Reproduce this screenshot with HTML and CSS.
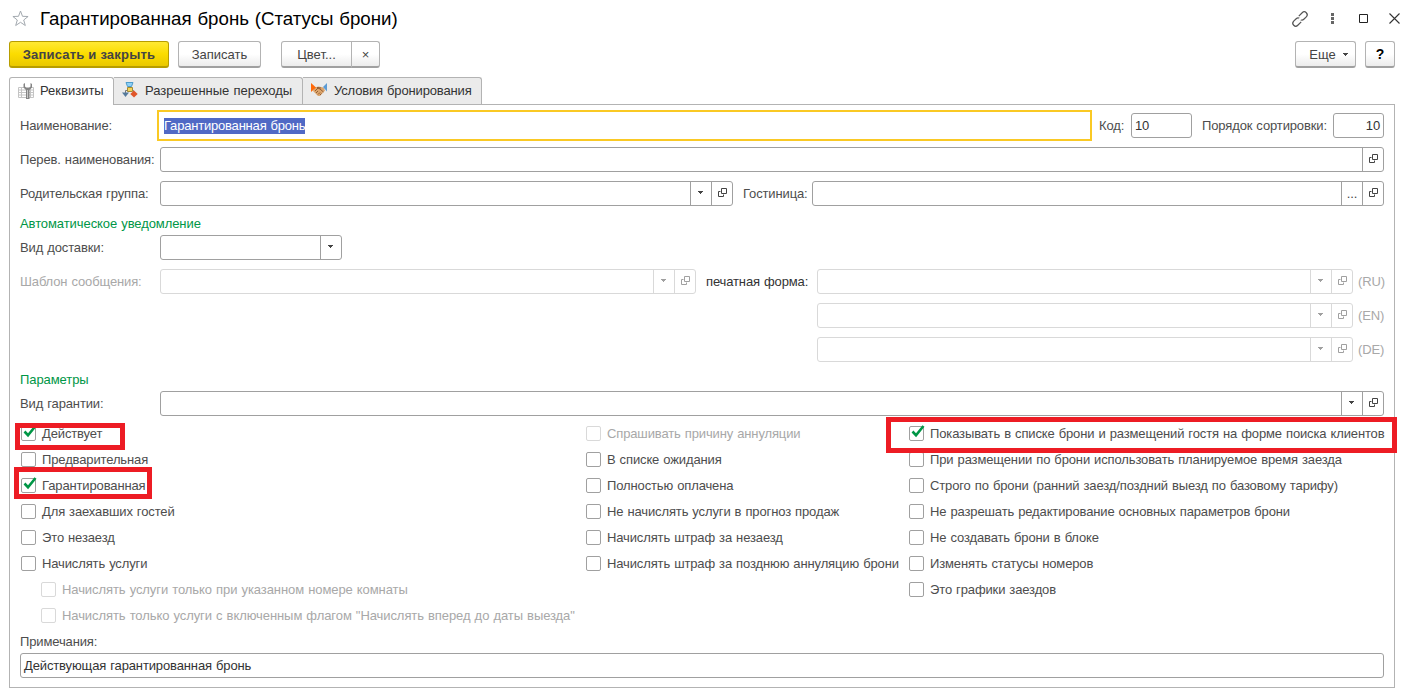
FILE: index.html
```html
<!DOCTYPE html>
<html lang="ru">
<head>
  <meta charset="UTF-8" />
  <meta name="viewport" content="width=device-width, initial-scale=1.0"/>
  <title>Гарантированная бронь (Статусы брони)</title>
  <link rel="stylesheet" href="styles.css">
</head>
<body>

  <svg class="sprite" width="0" height="0">
    <symbol id="open" viewBox="0 0 9 9">
      <path d="M3.500 .5h5v5h-5zM2.500 3.500h-2v5h5v-2" fill="none" stroke="currentColor"/>
    </symbol>
    <symbol id="arrow" viewBox="0 0 5 3">
      <path d="M0 0h5v1h-1v1h-1v1h-1v-1h-1v-1h-1z" fill="currentColor"/>
    </symbol>
    <symbol id="check" viewBox="0 0 14 13">
      <path d="M1.500 6.500L5 10.200L12.500 1" fill="none" stroke="#009646" stroke-width="2.600"/>
    </symbol>
  </svg>

  <header class="titlebar">
    <svg class="star" width="17" height="17" viewBox="0 0 17 17"><path d="M8.500 1l2 5.300 5.600.2-4.400 3.500 1.600 5.500-4.800-3.200-4.800 3.200L5.300 10 .9 6.500l5.600-.2z" fill="none" stroke="#a3a9af"/></svg>
    <h1>Гарантированная бронь (Статусы брони)</h1>
    <div class="window-buttons">
      <svg width="16" height="16" viewBox="0 0 16 16"><g fill="none" stroke="#555" stroke-width="1.200" transform="rotate(-45 8 8)"><path d="M9 8H3.500"/><path d="M5.500 4.800h-3a3.200 3.200 0 0 0 0 6.400h3a3.200 3.200 0 0 0 3.100-3.200" stroke="none"/><path d="M6.800 10.900H2a2.900 2.900 0 0 1 0-5.800h3.500a2.900 2.900 0 0 1 2.700 2"/><path d="M9.200 5.100H14a2.900 2.900 0 0 1 0 5.800h-3.500a2.900 2.900 0 0 1-2.700-2"/><path d="M3 8h6.500" stroke="#fff" stroke-width="2"/></g></svg>
      <svg width="3" height="11" viewBox="0 0 3 11"><path d="M0 0h3v3H0zM0 4h3v3H0zM0 8h3v3H0z" fill="#666"/></svg>
      <svg width="9" height="9" viewBox="0 0 9 9"><path d="M.5 .5h8v8h-8z" fill="none" stroke="#222"/></svg>
      <svg width="11" height="11" viewBox="0 0 11 11"><path d="M.5 .5l10 10M10.500 .5l-10 10" stroke="#333" stroke-width="1.100"/></svg>
    </div>
  </header>

  <div class="toolbar">
    <button class="btn btn-main">Записать и закрыть</button>
    <button class="btn btn-save">Записать</button>
    <div class="btn-group">
      <button class="btn btn-color">Цвет...</button>
      <button class="btn btn-clear">×</button>
    </div>
    <button class="btn btn-more">Еще <svg width="5" height="3"><use href="#arrow"/></svg></button>
    <button class="btn btn-help">?</button>
  </div>

  <nav class="tabs">
    <div class="tab tab-details active">
      <svg width="16" height="16" viewBox="0 0 16 16">
        <path d="M.5 4.500h15v10H.5zM.5 7h15M.5 9.500h15M.5 12h15M3.500 4.500v10M12.500 4.500v10" fill="#fff" stroke="#c4c4c4"/>
        <path d="M5.500 1v3.500L8 7v9h3.500V7L14 4.500V1l-1.500-1v3.500L11 5H8.500L7 3.500V0z" fill="#858585"/>
        <path d="M9.500 7v8" stroke="#c8c8c8"/>
      </svg>
      <span>Реквизиты</span>
    </div>
    <div class="tab tab-flow">
      <svg width="16" height="16" viewBox="0 0 16 16">
        <path d="M3.500 11V8.500h8V10" fill="none" stroke="#777"/>
        <path d="M4 .5h7L9.500 4.500h-4z" fill="#8fd0f5" stroke="#4d9ccc"/>
        <path d="M5.500 5.500h5v4h-5z" fill="#f3d45b" stroke="#a58b32"/>
        <path d="M0 10.500h7L3.500 15z" fill="#557a9c"/>
        <path d="M12 8.500l3.700 3.500-3.700 3.500L8.300 12z" fill="#e0562a"/>
      </svg>
      <span>Разрешенные переходы</span>
    </div>
    <div class="tab tab-terms">
      <svg width="16" height="14" viewBox="0 0 16 14">
        <path d="M3.500 4.500l4-1 5 1 1.500 3-5 5.500h-2L2 8z" fill="#dca66e"/>
        <path d="M4 8l3-3 2 1 3.500 3M5 10l2-2M7 11.500l2-2M9 12l1.500-1.500M6 4.500l4 .5" fill="none" stroke="#7d4a25" stroke-width=".8"/>
        <path d="M0 0l5 4.500L0 9z" fill="#ff6a0a"/>
        <path d="M16 0l-4 4 4 4.500z" fill="#5d9bd3"/>
      </svg>
      <span>Условия бронирования</span>
    </div>
  </nav>

  <main class="panel">
    <div class="row">
      <label class="label">Наименование:</label>
      <div class="field grow focused"><span class="selected">Гарантированная бронь</span></div>
      <label class="label-code">Код:</label>
      <div class="field field-code">10</div>
      <label class="label-order">Порядок сортировки:</label>
      <div class="field field-order">10</div>
    </div>
    <div class="row">
      <label class="label">Перев. наименования:</label>
      <div class="field grow"><i class="pick"><svg><use href="#open"/></svg></i></div>
    </div>
    <div class="row">
      <label class="label">Родительская группа:</label>
      <div class="field field-parent"><i class="drop"><svg><use href="#arrow"/></svg></i><i class="pick"><svg><use href="#open"/></svg></i></div>
      <label class="label-hotel">Гостиница:</label>
      <div class="field grow"><i class="dots">...</i><i class="pick"><svg><use href="#open"/></svg></i></div>
    </div>

    <h2>Автоматическое уведомление</h2>
    <div class="row">
      <label class="label">Вид доставки:</label>
      <div class="field field-delivery"><i class="drop"><svg><use href="#arrow"/></svg></i></div>
    </div>
    <div class="row disabled">
      <label class="label">Шаблон сообщения:</label>
      <div class="field field-template"><i class="drop"><svg><use href="#arrow"/></svg></i><i class="pick"><svg><use href="#open"/></svg></i></div>
      <label class="label-print">печатная форма:</label>
      <div class="field field-print"><i class="drop"><svg><use href="#arrow"/></svg></i><i class="pick"><svg><use href="#open"/></svg></i></div>
      <span class="lang">(RU)</span>
    </div>
    <div class="row disabled row-right">
      <div class="field field-print"><i class="drop"><svg><use href="#arrow"/></svg></i><i class="pick"><svg><use href="#open"/></svg></i></div>
      <span class="lang">(EN)</span>
    </div>
    <div class="row disabled row-right">
      <div class="field field-print"><i class="drop"><svg><use href="#arrow"/></svg></i><i class="pick"><svg><use href="#open"/></svg></i></div>
      <span class="lang">(DE)</span>
    </div>

    <h2>Параметры</h2>
    <div class="row">
      <label class="label">Вид гарантии:</label>
      <div class="field grow"><i class="drop"><svg><use href="#arrow"/></svg></i><i class="pick"><svg><use href="#open"/></svg></i></div>
    </div>

    <div class="checks">
      <div class="check-col">
        <div class="check"><b><svg><use href="#check"/></svg></b><span>Действует</span><div class="mark mark-active"></div></div>
        <div class="check"><b></b><span>Предварительная</span></div>
        <div class="check"><b><svg><use href="#check"/></svg></b><span>Гарантированная</span><div class="mark mark-guaranteed"></div></div>
        <div class="check"><b></b><span>Для заехавших гостей</span></div>
        <div class="check"><b></b><span>Это незаезд</span></div>
        <div class="check"><b></b><span>Начислять услуги</span></div>
        <div class="check sub off"><b></b><span>Начислять услуги только при указанном номере комнаты</span></div>
        <div class="check sub off"><b></b><span>Начислять только услуги с включенным флагом "Начислять вперед до даты выезда"</span></div>
      </div>
      <div class="check-col">
        <div class="check off"><b></b><span>Спрашивать причину аннуляции</span></div>
        <div class="check"><b></b><span>В списке ожидания</span></div>
        <div class="check"><b></b><span>Полностью оплачена</span></div>
        <div class="check"><b></b><span>Не начислять услуги в прогноз продаж</span></div>
        <div class="check"><b></b><span>Начислять штраф за незаезд</span></div>
        <div class="check"><b></b><span>Начислять штраф за позднюю аннуляцию брони</span></div>
      </div>
      <div class="check-col">
        <div class="check"><b><svg><use href="#check"/></svg></b><span>Показывать в списке брони и размещений гостя на форме поиска клиентов</span><div class="mark mark-search"></div></div>
        <div class="check"><b></b><span>При размещении по брони использовать планируемое время заезда</span></div>
        <div class="check"><b></b><span>Строго по брони (ранний заезд/поздний выезд по базовому тарифу)</span></div>
        <div class="check"><b></b><span>Не разрешать редактирование основных параметров брони</span></div>
        <div class="check"><b></b><span>Не создавать брони в блоке</span></div>
        <div class="check"><b></b><span>Изменять статусы номеров</span></div>
        <div class="check"><b></b><span>Это графики заездов</span></div>
      </div>
    </div>

    <label class="notes-label">Примечания:</label>
    <div class="field notes">Действующая гарантированная бронь</div>
  </main>

</body>
</html>
```
FILE: styles.css
```css
* {
  box-sizing: border-box;
}

body {
  margin: 0;
  padding: 0 15px 0 9px;
  height: 690px;
  overflow: hidden;
  background-color: #fff;
  color: #4d4d4d;
  font-family: "Liberation Sans", Arial, sans-serif;
  font-size: 13px;
  letter-spacing: -0.13px;
  word-spacing: 0.6px;
  white-space: nowrap;
}

svg {
  display: block;
  flex: none;
}

.sprite {
  position: absolute;
}

/* Title */
.titlebar {
  display: flex;
  align-items: center;
  height: 37px;
  padding-left: 3px;
}

.titlebar h1 {
  margin: 0 0 0 11px;
  color: #000;
  font-size: 18.7px;
  font-weight: normal;
  letter-spacing: 0;
}

.window-buttons {
  display: flex;
  align-items: center;
  margin: 0 -5px 0 auto;
}

.window-buttons svg:first-child {
  overflow: visible;
}

.window-buttons svg:nth-child(2) {
  margin-left: 23px;
}

.window-buttons svg:nth-child(3) {
  margin-left: 25px;
}

.window-buttons svg:nth-child(4) {
  margin-left: 21px;
}

/* Buttons */
.toolbar {
  display: flex;
  height: 40px;
  padding-top: 4px;
  letter-spacing: 0;
}

.btn {
  display: flex;
  align-items: center;
  justify-content: center;
  height: 27px;
  padding: 0;
  border: 1px solid #b3b3b3;
  border-bottom: 2px solid #a0a0a0;
  border-radius: 3px;
  background: linear-gradient(#fff 50%, #ececec);
  color: #444;
  font: inherit;
  letter-spacing: inherit;
}

.btn-main {
  width: 160px;
  border-color: #b79d00;
  background: linear-gradient(#ffe934, #fbdc00 50%, #e9c800);
  font-weight: bold;
  letter-spacing: 0.2px;
}

.btn-save {
  width: 83px;
  margin-left: 9px;
}

.btn-group {
  display: flex;
  margin-left: 20px;
}

.btn-color {
  width: 71px;
  border-radius: 3px 0 0 3px;
}

.btn-clear {
  width: 29px;
  margin-left: -1px;
  border-radius: 0 3px 3px 0;
}

.btn-more {
  width: 61px;
  margin-left: auto;
  padding-left: 6px;
  gap: 7px;
}

.btn-help {
  width: 30px;
  margin-left: 9px;
  color: #000;
  font-size: 14px;
  font-weight: bold;
}

/* Tabs */
.tabs {
  display: flex;
  height: 27px;
  letter-spacing: 0;
}

.tab {
  display: flex;
  align-items: center;
  height: 27px;
  padding: 0 0 2px 8px;
  border: 1px solid #b3b3b3;
  border-left: none;
  border-bottom: none;
  border-radius: 0 3px 0 0;
  background-color: #ebebeb;
  color: #333;
}

.tab svg {
  width: 16px;
  margin-right: 7px;
}

.tab-details {
  width: 105px;
}

.tab-flow {
  width: 189px;
}

.tab-terms {
  width: 179px;
  letter-spacing: -0.15px;
}

.tab.active {
  position: relative;
  height: 28px;
  border-left: 1px solid #b3b3b3;
  border-radius: 3px 3px 0 0;
  background-color: #fff;
}

.tab-details svg {
  margin-right: 6px;
}

/* Form */
.panel {
  width: 1386px;
  height: 584px;
  padding: 8px 10px 9px;
  border: 1px solid #b3b3b3;
}

.row {
  display: flex;
  align-items: center;
  height: 25px;
  margin-bottom: 9px;
}

.label {
  flex: none;
  width: 140px;
}

.field {
  display: flex;
  align-items: center;
  flex: none;
  height: 25px;
  padding-left: 3px;
  border: 1px solid #a0a0a0;
  border-radius: 3px;
  background-color: #fff;
  color: #333;
}

.grow {
  flex: 1;
}

.focused {
  height: 31px;
  margin-left: -3px;
  padding-left: 5px;
  border: 2px solid #fac924;
  border-radius: 0;
}

.selected {
  height: 16px;
  line-height: 16px;
  background-color: #5069c5;
  color: #fff;
  letter-spacing: -0.2px;
}

.label-code {
  flex: none;
  width: 32px;
  margin-left: 7px;
}

.field-code {
  width: 61px;
}

.label-order {
  width: 131px;
  margin-left: 10px;
}

.field-order {
  width: 51px;
  justify-content: flex-end;
  padding-right: 3px;
}

.field-parent {
  width: 573px;
}

.label-hotel {
  width: 69px;
  margin-left: 10px;
}

.field-delivery {
  width: 182px;
}

.field-template {
  width: 536px;
}

.label-print {
  width: 111px;
  margin-left: 10px;
  color: #333;
}

.field-print {
  width: 536px;
}

.lang {
  width: 26px;
  margin-left: 5px;
}

.row-right {
  justify-content: flex-end;
}

.field i {
  display: flex;
  align-items: center;
  justify-content: center;
  width: 21px;
  height: 23px;
  border-left: 1px solid #a0a0a0;
  color: #444;
  font-style: normal;
}

.field i:first-child {
  margin-left: auto;
}

.drop svg {
  width: 5px;
  height: 3px;
  margin: -2px 1px 0 0;
}

.pick svg {
  width: 9px;
  height: 9px;
  margin: -2px 0 0 1px;
}

.disabled {
  color: #a8a8a8;
}

.disabled .field,
.disabled .field i {
  border-color: #d9d9d9;
  color: #a0a0a0;
}

h2 {
  height: 16px;
  margin: 0 0 4px;
  color: #009646;
  font-size: 13px;
  font-weight: normal;
  letter-spacing: -0.08px;
  line-height: 18px;
}

/* Checkboxes */
.checks {
  display: grid;
  grid-template-columns: 565px 323px 1fr;
  height: 208px;
  margin-top: -5px;
  padding-left: 1px;
}

.check {
  position: relative;
  display: flex;
  height: 26px;
  padding-top: 6px;
  line-height: 15px;
}

.check b {
  flex: none;
  width: 15px;
  height: 15px;
  margin-right: 6px;
  border: 1px solid #a0a0a0;
  border-radius: 2px;
}

.check b svg {
  width: 14px;
  height: 13px;
  margin: -2px 0 0 1px;
}

.sub {
  padding-left: 20px;
  letter-spacing: -0.08px;
}

.off {
  color: #a8a8a8;
}

.off b {
  border-color: #d9d9d9;
}

/* Red frames around the important flags */
.mark {
  position: absolute;
  border: 5px solid #ed1c24;
  z-index: 1;
}

.mark-active {
  top: 3px;
  left: -6px;
  width: 110px;
  height: 27px;
}

.mark-guaranteed {
  top: -5px;
  left: -7px;
  width: 138px;
  height: 32px;
}

.mark-search {
  top: -3px;
  left: -23px;
  width: 511px;
  height: 36px;
}

.notes-label {
  display: block;
  height: 25px;
  line-height: 28px;
}
```
